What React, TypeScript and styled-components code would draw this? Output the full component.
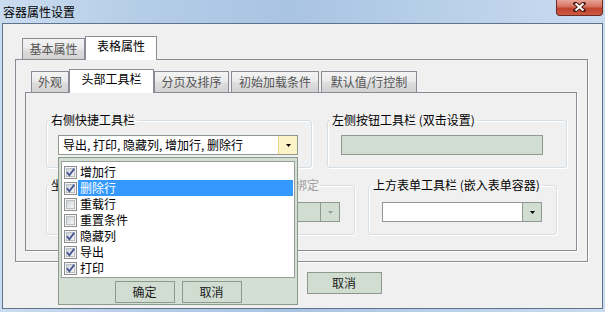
import React from 'react';
import styled, { createGlobalStyle } from 'styled-components';

const GlobalStyle = createGlobalStyle`
    html, body {
        margin: 0;
        padding: 0;
        background: #ffffff;
    }
    body {
        font-family: "Noto Sans CJK SC", "Liberation Sans", sans-serif;
        font-size: 12px;
        color: #000;
    }
`;

const Window = styled.div`
    position: relative;
    width: 605px;
    height: 312px;
    box-sizing: border-box;
    padding: 0 2px 3px 2px;
    display: flex;
    flex-direction: column;
    overflow: hidden;
    background: linear-gradient(90deg, #cadcf0 0%, #b6cde8 22%, #a9c3e2 48%, #b8cfe9 72%, #c9dbef 100%);
`;

const TitleBar = styled.div`
    height: 23px;
    display: flex;
    align-items: flex-start;
    justify-content: space-between;
`;

const Title = styled.div`
    margin: 5px 0 0 1px;
    line-height: 14px;
    font-size: 12px;
    color: #000;
`;

const CloseButton = styled.div`
    width: 47px;
    height: 16px;
    box-sizing: border-box;
    border: 1px solid #6b2a22;
    border-top: none;
    border-radius: 0 0 4px 4px;
    background: linear-gradient(#e9a596 0%, #d5705e 45%, #c0432d 55%, #cc5a44 100%);
    display: flex;
    align-items: center;
    justify-content: center;
    padding-bottom: 2px;
`;

const Client = styled.div`
    flex: 1;
    background: #f0f0f0;
    border: 1px solid #5f738c;
    padding: 12px 14px 0 12px;
    display: flex;
    flex-direction: column;
`;

const TabStrip = styled.div<{ $offset: number }>`
    display: flex;
    align-items: flex-end;
    height: 23px;
    margin-left: ${p => p.$offset}px;
`;

const Tab = styled.div<{ $active?: boolean; $w: number }>`
    position: relative;
    box-sizing: border-box;
    width: ${p => p.$w}px;
    height: ${p => (p.$active ? 24 : 21)}px;
    margin: ${p => (p.$active ? '0 -1px -1px -1px' : '0 1px 0 1px')};
    z-index: ${p => (p.$active ? 2 : 1)};
    border: 1px solid #898c95;
    border-bottom: none;
    background: ${p => (p.$active ? '#ffffff' : 'linear-gradient(#f3f3f3 0%, #ebebeb 45%, #dedede 55%, #d2d2d2 100%)')};
    color: ${p => (p.$active ? '#000' : '#555')};
    text-align: center;
    line-height: ${p => (p.$active ? 18 : 19)}px;
    white-space: nowrap;
`;

const TabPanel = styled.div<{ $h: number }>`
    position: relative;
    box-sizing: border-box;
    height: ${p => p.$h}px;
    border: 1px solid #898c95;
    box-shadow: 1px 1px 0 #ffffff;
    background: #f0f0f0;
    display: flex;
    flex-direction: column;
`;

const OuterBody = styled.div`
    padding: 9px 10px 10px 9px;
    display: flex;
    flex-direction: column;
`;

const InnerBody = styled.div`
    padding: 19px 0 0 20px;
    display: flex;
    flex-direction: column;
    gap: 9px;
`;

const Row = styled.div<{ $gap: number }>`
    display: flex;
    gap: ${p => p.$gap}px;
`;

const Group = styled.fieldset<{ $w: number }>`
    position: relative;
    box-sizing: border-box;
    width: ${p => p.$w}px;
    min-width: 0;
    margin: 0;
    padding: 0;
    border: 1px solid #d5dfe5;
    border-radius: 3px;
    box-shadow: inset 1px 1px 0 #ffffff, 1px 1px 0 #ffffff;
`;

const Legend = styled.legend`
    margin-left: 2px;
    padding: 0 2px;
    line-height: 16px;
    font-size: 12px;
    color: #000;
    white-space: nowrap;
`;

const LegendGap = styled.span<{ $w: number }>`
    display: inline-block;
    width: ${p => p.$w}px;
`;

const Muted = styled.span`
    color: #a0a0a0;
`;

const GroupBody = styled.div<{ $top: number; $left: number }>`
    padding: ${p => p.$top}px 0 12px ${p => p.$left}px;
`;

const Combo = styled.div<{ $w: number; $disabled?: boolean }>`
    position: relative;
    box-sizing: border-box;
    width: ${p => p.$w}px;
    height: 20px;
    border: 1px solid #8d9a8d;
    background: ${p => (p.$disabled ? '#d1ddd1' : '#ffffff')};
    display: flex;
`;

const ComboText = styled.div`
    flex: 1;
    padding-left: 4px;
    line-height: 18px;
    white-space: nowrap;
    overflow: hidden;
`;

const ComboButton = styled.div<{ $hover?: boolean }>`
    width: 18px;
    border-left: 1px solid ${p => (p.$hover ? '#e5d38a' : '#8d9a8d')};
    background: ${p => (p.$hover ? '#fdf3c8' : '#d1ddd1')};
    display: flex;
    align-items: center;
    justify-content: center;
`;

const ReadonlyBox = styled.div<{ $w: number }>`
    box-sizing: border-box;
    width: ${p => p.$w}px;
    height: 20px;
    border: 1px solid #8d9a8d;
    background: #d0ddd0;
`;

const Popup = styled.div`
    position: absolute;
    left: -1px;
    top: calc(100% + 3px);
    z-index: 10;
    box-sizing: border-box;
    width: 240px;
    height: 148px;
    border: 1px solid #8f9a8f;
    background: #d3dfd3;
    padding: 3px 2px 0 2px;
    display: flex;
    flex-direction: column;
`;

const List = styled.div`
    box-sizing: border-box;
    height: 117px;
    border: 1px solid #9a9d9a;
    background: #ffffff;
    padding: 2px 1px 1px 2px;
`;

const Item = styled.div`
    display: flex;
    align-items: center;
    height: 16px;
`;

const ItemLabel = styled.div<{ $selected?: boolean }>`
    flex: 1;
    margin-left: 1px;
    padding-left: 2px;
    height: 16px;
    line-height: 16px;
    background: ${p => (p.$selected ? '#3399ff' : 'transparent')};
    color: ${p => (p.$selected ? '#ffffff' : '#000')};
`;

const ButtonRow = styled.div<{ $gap: number; $top: number }>`
    display: flex;
    justify-content: center;
    gap: ${p => p.$gap}px;
    margin-top: ${p => p.$top}px;
`;

const Button = styled.div<{ $w: number }>`
    box-sizing: border-box;
    width: ${p => p.$w}px;
    height: 22px;
    border: 1px solid #8c998c;
    background: #d0ddd0;
    color: #1a1a1a;
    text-align: center;
    line-height: 20px;
`;

function CloseGlyph() {
    return (
        <svg width="13" height="10" viewBox="0 0 13 10">
            <path d="M2.5 1.5 L10.5 8.5 M10.5 1.5 L2.5 8.5" stroke="#4b1710" strokeWidth="4" strokeLinecap="square" />
            <path d="M2.5 1.5 L10.5 8.5 M10.5 1.5 L2.5 8.5" stroke="#ffffff" strokeWidth="2" />
        </svg>
    );
}

function Arrow({ color }: { color: string }) {
    return (
        <svg width="5" height="3" viewBox="0 0 5 3">
            <polygon points="0,0 5,0 2.5,3" fill={color} />
        </svg>
    );
}

function CheckBox({ checked }: { checked: boolean }) {
    return (
        <svg width="13" height="13" viewBox="0 0 13 13">
            <defs>
                <linearGradient id="cbFill" x1="0" y1="0" x2="1" y2="1">
                    <stop offset="0" stopColor="#cfd2d6" />
                    <stop offset="1" stopColor="#f7f7f7" />
                </linearGradient>
            </defs>
            <rect x="0.5" y="0.5" width="12" height="12" fill="#f4f4f4" stroke="#8e8f8f" />
            <rect x="2.5" y="2.5" width="8" height="8" fill="url(#cbFill)" stroke="#b9bcc0" />
            {checked && (
                <path d="M3 6.2 L5.4 9.2 L10.2 2.8" fill="none" stroke="#3f5595" strokeWidth="1.8" />
            )}
        </svg>
    );
}

const toolbarItems = [
    { label: '增加行', checked: true },
    { label: '删除行', checked: true, selected: true },
    { label: '重载行', checked: false },
    { label: '重置条件', checked: false },
    { label: '隐藏列', checked: true },
    { label: '导出', checked: true },
    { label: '打印', checked: true },
];

const outerTabs = [
    { label: '基本属性', w: 63 },
    { label: '表格属性', w: 72, active: true },
];

const innerTabs = [
    { label: '外观', w: 38 },
    { label: '头部工具栏', w: 85, active: true },
    { label: '分页及排序', w: 75 },
    { label: '初始加载条件', w: 88 },
    { label: '默认值/行控制', w: 96 },
];

export default function App() {
    return (
        <>
            <GlobalStyle />
            <Window>
                <TitleBar>
                    <Title>容器属性设置</Title>
                    <CloseButton>
                        <CloseGlyph />
                    </CloseButton>
                </TitleBar>
                <Client>
                    <TabStrip $offset={6}>
                        {outerTabs.map(t => (
                            <Tab key={t.label} $w={t.w} $active={t.active}>{t.label}</Tab>
                        ))}
                    </TabStrip>
                    <TabPanel $h={203}>
                        <OuterBody>
                            <TabStrip $offset={5}>
                                {innerTabs.map(t => (
                                    <Tab key={t.label} $w={t.w} $active={t.active}>{t.label}</Tab>
                                ))}
                            </TabStrip>
                            <TabPanel $h={159}>
                                <InnerBody>
                                    <Row $gap={15}>
                                        <Group $w={266}>
                                            <Legend>右侧快捷工具栏</Legend>
                                            <GroupBody $top={7} $left={11}>
                                                <Combo $w={240}>
                                                    <ComboText>导出, 打印, 隐藏列, 增加行, 删除行</ComboText>
                                                    <ComboButton $hover>
                                                        <Arrow color="#000" />
                                                    </ComboButton>
                                                    <Popup>
                                                        <List>
                                                            {toolbarItems.map(item => (
                                                                <Item key={item.label}>
                                                                    <CheckBox checked={item.checked} />
                                                                    <ItemLabel $selected={item.selected}>{item.label}</ItemLabel>
                                                                </Item>
                                                            ))}
                                                        </List>
                                                        <ButtonRow $gap={7} $top={3}>
                                                            <Button $w={60}>确定</Button>
                                                            <Button $w={60}>取消</Button>
                                                        </ButtonRow>
                                                    </Popup>
                                                </Combo>
                                            </GroupBody>
                                        </Group>
                                        <Group $w={240}>
                                            <Legend>左侧按钮工具栏 (双击设置)</Legend>
                                            <GroupBody $top={7} $left={13}>
                                                <ReadonlyBox $w={202} />
                                            </GroupBody>
                                        </Group>
                                    </Row>
                                    <Row $gap={13}>
                                        <Group $w={309}>
                                            <Legend>
                                                坐<LegendGap $w={232} /><Muted>绑定</Muted>
                                            </Legend>
                                            <GroupBody $top={9} $left={11}>
                                                <Combo $w={282} $disabled>
                                                    <ComboText />
                                                    <ComboButton>
                                                        <Arrow color="#9a9a9a" />
                                                    </ComboButton>
                                                </Combo>
                                            </GroupBody>
                                        </Group>
                                        <Group $w={189}>
                                            <Legend>上方表单工具栏 (嵌入表单容器)</Legend>
                                            <GroupBody $top={9} $left={13}>
                                                <Combo $w={160}>
                                                    <ComboText />
                                                    <ComboButton>
                                                        <Arrow color="#000" />
                                                    </ComboButton>
                                                </Combo>
                                            </GroupBody>
                                        </Group>
                                    </Row>
                                </InnerBody>
                            </TabPanel>
                        </OuterBody>
                    </TabPanel>
                    <ButtonRow $gap={10} $top={10}>
                        <Button $w={75}>确定</Button>
                        <Button $w={75}>取消</Button>
                    </ButtonRow>
                </Client>
            </Window>
        </>
    );
}
